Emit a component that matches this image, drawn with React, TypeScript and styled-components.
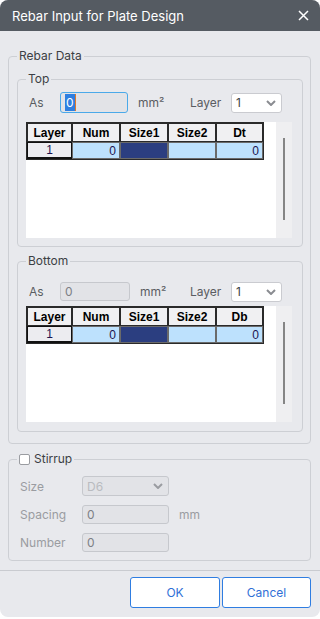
import React from "react";
import styled, { createGlobalStyle } from "styled-components";

const Global = createGlobalStyle`
  html, body { margin: 0; padding: 0; background: #ffffff; }
  body { font-family: Inter, "Noto Sans", sans-serif; }
  * { box-sizing: border-box; }
`;

const Dialog = styled.div`
  width: 320px;
  height: 617px;
  border-radius: 8px;
  overflow: hidden;
  background: #e8e9ed;
  display: flex;
  flex-direction: column;
`;

const TitleBar = styled.div`
  height: 31px;
  flex: none;
  background: #555b62;
  color: #ffffff;
  display: flex;
  align-items: center;
  justify-content: space-between;
  padding: 0 11px 0 12px;
  font-size: 13px;
`;

const Body = styled.div`
  flex: 1;
  padding: 17px 9px 0 8px;
  display: flex;
  flex-direction: column;
  gap: 7px;
`;

const Group = styled.fieldset<{ $pad: string; $gap?: number }>`
  margin: 0;
  min-width: 0;
  border: 1px solid #cdcfd4;
  border-radius: 4px;
  padding: ${(p) => p.$pad};
  display: flex;
  flex-direction: column;
  gap: ${(p) => p.$gap ?? 0}px;
`;

const Legend = styled.legend<{ $ml?: number }>`
  font-size: 12px;
  line-height: 16px;
  color: #3c3f44;
  padding: 0 2px;
  margin-left: ${(p) => p.$ml ?? 0}px;
  display: flex;
  align-items: center;
  gap: 4px;
`;

const CheckBox = styled.span`
  width: 11px;
  height: 11px;
  border: 1px solid #9a9ca1;
  border-radius: 2px;
  background: #ffffff;
  display: inline-block;
`;

const InputRow = styled.div<{ $mt: number }>`
  display: flex;
  align-items: center;
  height: 21px;
  margin-top: ${(p) => p.$mt}px;
  padding-left: 3px;
`;

const Label = styled.span<{ $w: number; $muted?: boolean }>`
  width: ${(p) => p.$w}px;
  flex: none;
  font-size: 12px;
  color: ${(p) => (p.$muted ? "#9a9ca1" : "#5a5d62")};
`;

const TextBox = styled.div<{ $w: number; $focus?: boolean }>`
  width: ${(p) => p.$w}px;
  height: ${(p) => (p.$focus ? 21 : 19)}px;
  flex: none;
  background: #e2e3e7;
  border: 1px solid ${(p) => (p.$focus ? "#4aa9e9" : "#c6c8cd")};
  border-radius: 3px;
  display: flex;
  align-items: center;
  padding-left: 4px;
  font-size: 12px;
  color: #7d8085;
`;

const Selected = styled.span`
  background: #2f7fe0;
  color: #ffffff;
  height: 17px;
  line-height: 17px;
  padding: 0 1px;
  border-right: 1px solid #e07a2a;
`;

const Unit = styled.span<{ $w: number; $muted?: boolean }>`
  width: ${(p) => p.$w}px;
  flex: none;
  padding-left: 10px;
  font-size: 12px;
  color: ${(p) => (p.$muted ? "#9a9ca1" : "#5a5d62")};
`;

const SelectBox = styled.div<{ $w: number; $disabled?: boolean }>`
  width: ${(p) => p.$w}px;
  height: 20px;
  flex: none;
  background: ${(p) => (p.$disabled ? "#e2e3e7" : "#ffffff")};
  border: 1px solid ${(p) => (p.$disabled ? "#c6c8cd" : "#cacbd0")};
  border-radius: 3px;
  display: flex;
  align-items: center;
  justify-content: space-between;
  padding: 0 5px 0 4px;
  font-size: 12px;
  color: ${(p) => (p.$disabled ? "#b9bbc0" : "#3c3f44")};
`;

const GridArea = styled.div<{ $mt: number }>`
  display: flex;
  width: 266px;
  height: 116px;
  flex: none;
  margin-top: ${(p) => p.$mt}px;
`;

const GridCanvas = styled.div`
  flex: 1;
  background: #ffffff;
`;

const ScrollTrack = styled.div`
  width: 16px;
  background: #efeff1;
  display: flex;
  justify-content: center;
  padding: 16px 0 18px;
`;

const ScrollThumb = styled.div`
  width: 2px;
  height: 100%;
  background: #858585;
`;

const Table = styled.div`
  display: grid;
  grid-template-columns: 45px 48px 48px 48px 47px;
  grid-template-rows: 19px 17px;
  width: 238px;
  border: 1px solid #2a2a2a;
  font-family: "Liberation Sans", Arial, sans-serif;
  font-size: 12px;
`;

const HeadCell = styled.div`
  border: 1px solid #2a2a2a;
  background: #f0f0f2;
  font-weight: bold;
  color: #000;
  display: flex;
  align-items: center;
  justify-content: center;
`;

type Tone = "row" | "light" | "dark";

const DataCell = styled.div<{ $tone: Tone }>`
  border: 1px solid ${(p) => (p.$tone === "row" ? "#111111" : "#6a6a6a")};
  border-bottom-width: ${(p) => (p.$tone === "row" ? 2 : 1)}px;
  background: ${(p) =>
    p.$tone === "row" ? "#ececf0" : p.$tone === "dark" ? "#2b3e80" : "#bde1fd"};
  color: #1b1450;
  display: flex;
  align-items: center;
  justify-content: ${(p) => (p.$tone === "row" ? "center" : "flex-end")};
  padding-right: ${(p) => (p.$tone === "row" ? 0 : 3)}px;
  line-height: 1;
`;

const StirrupRow = styled.div`
  display: flex;
  align-items: center;
  height: 20px;
`;

const StirrupRows = styled.div`
  display: flex;
  flex-direction: column;
  gap: 8px;
`;

const Footer = styled.div`
  flex: none;
  border-top: 1px solid #c9cbd0;
  margin-top: 7px;
  padding: 6px 9px 9px 0;
  display: flex;
  justify-content: flex-end;
  gap: 2px;
`;

const Button = styled.button<{ $w: number }>`
  width: ${(p) => p.$w}px;
  height: 31px;
  background: #ffffff;
  border: 1px solid #2f7de1;
  border-radius: 3px;
  color: #2f6fd6;
  font-family: Inter, "Noto Sans", sans-serif;
  font-size: 12px;
  padding: 0;
`;

const Chevron = ({ color }: { color: string }) => (
  <svg width="10" height="6" viewBox="0 0 10 6">
    <path d="M1 1 L5 5 L9 1" fill="none" stroke={color} strokeWidth="2" />
  </svg>
);

const CloseIcon = () => (
  <svg width="11" height="11" viewBox="0 0 11 11">
    <path d="M1 1 L10 10 M10 1 L1 10" stroke="#ffffff" strokeWidth="1.5" />
  </svg>
);

const RebarGrid = ({ last, mt }: { last: string; mt: number }) => (
  <GridArea $mt={mt}>
    <GridCanvas>
      <Table>
        {["Layer", "Num", "Size1", "Size2", last].map((h) => (
          <HeadCell key={h}>{h}</HeadCell>
        ))}
        <DataCell $tone="row">1</DataCell>
        <DataCell $tone="light">0</DataCell>
        <DataCell $tone="dark" />
        <DataCell $tone="light" />
        <DataCell $tone="light">0</DataCell>
      </Table>
    </GridCanvas>
    <ScrollTrack>
      <ScrollThumb />
    </ScrollTrack>
  </GridArea>
);

export default function App() {
  return (
    <>
      <Global />
      <Dialog>
        <TitleBar>
          <span>Rebar Input for Plate Design</span>
          <CloseIcon />
        </TitleBar>
        <Body>
          <Group $pad="7px 7px 11px 8px" $gap={6}>
            <Legend>Rebar Data</Legend>
            <Group $pad="0 9px 8px 8px">
              <Legend>Top</Legend>
              <InputRow $mt={5}>
                <Label $w={31}>As</Label>
                <TextBox $w={68} $focus>
                  <Selected>0</Selected>
                </TextBox>
                <Unit $w={62}>mm²</Unit>
                <Label $w={41}>Layer</Label>
                <SelectBox $w={51}>
                  <span>1</span>
                  <Chevron color="#8a8c91" />
                </SelectBox>
              </InputRow>
              <RebarGrid last="Dt" mt={9} />
            </Group>
            <Group $pad="0 9px 9px 8px">
              <Legend>Bottom</Legend>
              <InputRow $mt={12}>
                <Label $w={31}>As</Label>
                <TextBox $w={70}>0</TextBox>
                <Unit $w={60}>mm²</Unit>
                <Label $w={41}>Layer</Label>
                <SelectBox $w={51}>
                  <span>1</span>
                  <Chevron color="#8a8c91" />
                </SelectBox>
              </InputRow>
              <RebarGrid last="Db" mt={4} />
            </Group>
          </Group>
          <Group $pad="9px 7px 8px 11px">
            <Legend $ml={-3}>
              <CheckBox />
              Stirrup
            </Legend>
            <StirrupRows>
              <StirrupRow>
                <Label $w={62} $muted>Size</Label>
                <SelectBox $w={87} $disabled>
                  <span>D6</span>
                  <Chevron color="#9a9ca1" />
                </SelectBox>
              </StirrupRow>
              <StirrupRow>
                <Label $w={62} $muted>Spacing</Label>
                <TextBox $w={87}>0</TextBox>
                <Unit $w={40} $muted>mm</Unit>
              </StirrupRow>
              <StirrupRow>
                <Label $w={62} $muted>Number</Label>
                <TextBox $w={87}>0</TextBox>
              </StirrupRow>
            </StirrupRows>
          </Group>
        </Body>
        <Footer>
          <Button $w={90}>OK</Button>
          <Button $w={89}>Cancel</Button>
        </Footer>
      </Dialog>
    </>
  );
}
